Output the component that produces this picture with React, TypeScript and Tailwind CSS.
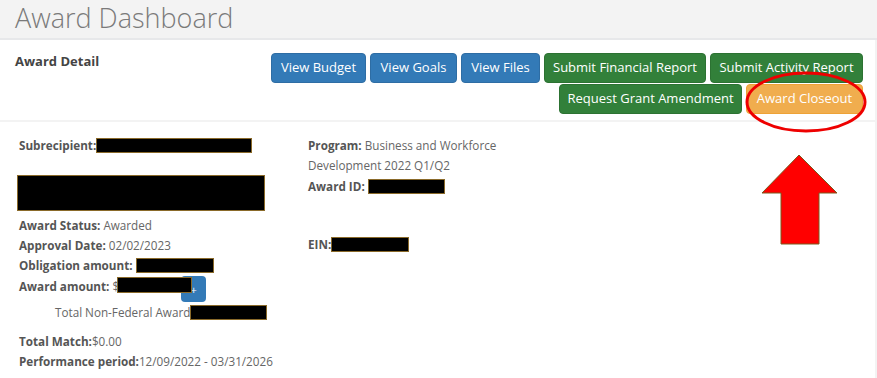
import React from "react";

const font = { fontFamily: '"Open Sans", "Liberation Sans", sans-serif' };

function Redact({ className = "" }: { className?: string }) {
  return (
    <span
      className={`inline-block bg-black border border-[#8a6a2a] align-middle ${className}`}
    />
  );
}

function Btn({
  children,
  color,
  width,
}: {
  children: React.ReactNode;
  color: "blue" | "green" | "orange";
  width: string;
}) {
  const tone =
    color === "blue"
      ? "bg-[#337ab7] border-[#2e6da4]"
      : color === "green"
        ? "bg-[#32803a] border-[#2c7232]"
        : "bg-[#f0ad4e] border-[#eea236]";
  return (
    <button
      className={`h-[30px] ${width} rounded-[4px] border text-[13px] text-white whitespace-nowrap ${tone}`}
    >
      {children}
    </button>
  );
}

export default function App() {
  return (
    <div
      className="relative w-[877px] h-[378px] overflow-hidden bg-[#f3f3f3] text-[#555]"
      style={font}
    >
      {/* page header */}
      <div className="h-[40px] border-b-2 border-[#e7e8ea] pl-[15px]">
        <h1 className="text-[27px] font-light leading-[36px] text-[#7a7a7a]">
          Award Dashboard
        </h1>
      </div>

      {/* panel heading */}
      <div className="mr-[2px] flex h-[80px] justify-between bg-white pl-[15px] pr-[12px] pt-[13px]">
        <h2 className="text-[13px] font-bold leading-[16px] text-[#444]">
          Award Detail
        </h2>
        <div className="flex flex-col items-end gap-px">
          <div className="flex gap-[4px]">
            <Btn color="blue" width="w-[95px]">View Budget</Btn>
            <Btn color="blue" width="w-[87px]">View Goals</Btn>
            <Btn color="blue" width="w-[79px]">View Files</Btn>
            <Btn color="green" width="w-[162px]">Submit Financial Report</Btn>
            <Btn color="green" width="w-[153px]">Submit Activity Report</Btn>
          </div>
          <div className="flex gap-[4px]">
            <Btn color="green" width="w-[183px]">Request Grant Amendment</Btn>
            <Btn color="orange" width="w-[117px]">Award Closeout</Btn>
          </div>
        </div>
      </div>

      {/* panel body */}
      <div className="mr-[2px] mt-[2px] flex h-[300px] bg-white pl-[19px] pt-[13px] text-[11.7px] leading-[20px]">
        <div className="w-[289px]">
          <div className="flex h-[20px] items-center">
            <b>Subrecipient:</b>
            <Redact className="h-[15px] w-[156px]" />
          </div>
          <div className="-ml-[2px] mt-[20px] h-[36px] w-[248px] bg-black border border-[#8a6a2a]" />
          <div className="mt-[4px]">
            <b>Award Status:</b> <span className="text-[#666]">Awarded</span>
          </div>
          <div>
            <b>Approval Date:</b> <span className="text-[#666]">02/02/2023</span>
          </div>
          <div className="flex h-[20px] items-center">
            <b>Obligation amount:</b>&nbsp;
            <Redact className="h-[15px] w-[78px]" />
          </div>
          <div className="mt-px flex h-[26px] items-start">
            <span className="leading-[20px]">
              <b>Award amount:</b> <span className="text-[#666]">$</span>
            </span>
            <Redact className="relative z-10 mt-[1px] -ml-[2px] -mr-[11px] h-[16px] w-[75px]" />
            <span className="flex h-[26px] w-[25px] items-center justify-center rounded-[4px] bg-[#337ab7] text-[11px] leading-none text-white">
              +
            </span>
          </div>
          <div className="flex h-[20px] items-center pl-[36px] text-[#666]">
            Total Non-Federal Award:
            <Redact className="-ml-[3px] h-[15px] w-[77px]" />
          </div>
          <div className="mt-[9px]">
            <b>Total Match:</b>
            <span className="text-[#666]">$0.00</span>
          </div>
          <div>
            <b>Performance period:</b>
            <span className="text-[#666]">12/09/2022 - 03/31/2026</span>
          </div>
        </div>

        <div className="w-[200px]">
          <div className="text-[#666]">
            <b className="text-[#555]">Program:</b> Business and Workforce
            Development 2022 Q1/Q2
          </div>
          <div className="mt-px flex h-[20px] items-center">
            <b>Award ID:</b>&nbsp;
            <Redact className="h-[15px] w-[77px]" />
          </div>
          <div className="mt-[38px] flex h-[20px] items-center">
            <b>EIN:</b>
            <Redact className="h-[15px] w-[78px]" />
          </div>
        </div>
      </div>

      {/* annotations */}
      <svg
        className="pointer-events-none absolute left-0 top-0"
        width="877"
        height="378"
        viewBox="0 0 877 378"
      >
        <ellipse
          cx="806"
          cy="102"
          rx="59"
          ry="29"
          fill="none"
          stroke="#ee0000"
          strokeWidth="3"
        />
        <polygon
          points="799,155 837,193 819,193 819,244 781,244 781,193 762,193"
          fill="#ff0000"
          stroke="#7a5a1f"
          strokeWidth="1"
        />
      </svg>
    </div>
  );
}
